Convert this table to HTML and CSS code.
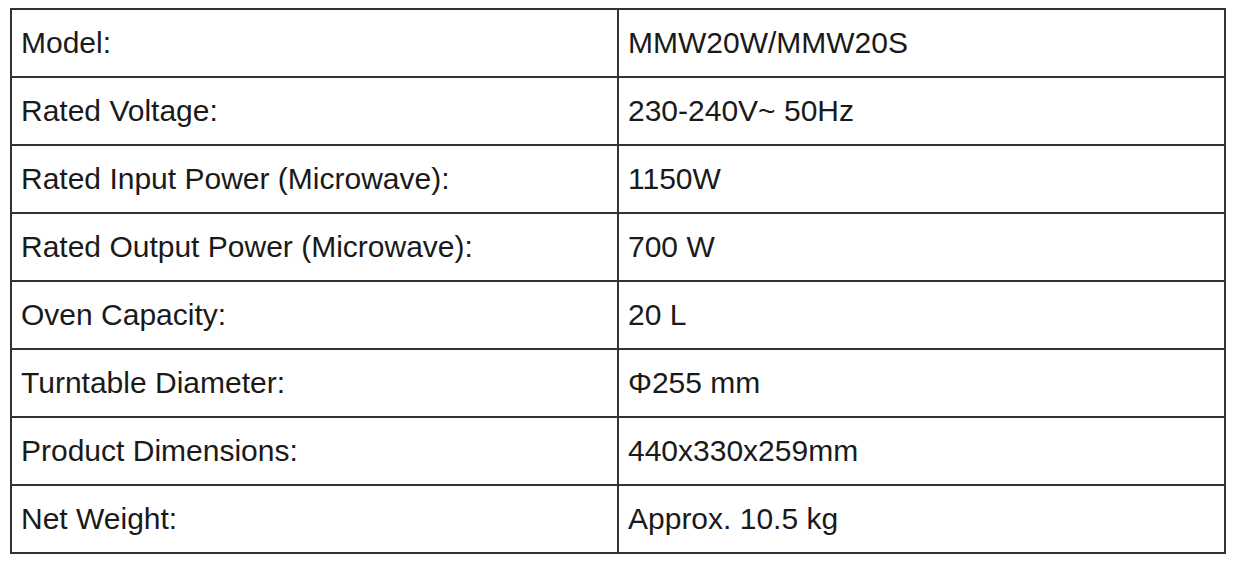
FILE: index.html
```html
<!DOCTYPE html>
<html>
<head>
<meta charset="utf-8">
<link rel="stylesheet" href="styles.css">
</head>
<body>
<table class="spec">
<tr><td class="label">Model:</td><td class="value">MMW20W/MMW20S</td></tr>
<tr><td class="label">Rated Voltage:</td><td class="value">230-240V~ 50Hz</td></tr>
<tr><td class="label">Rated Input Power (Microwave):</td><td class="value">1150W</td></tr>
<tr><td class="label">Rated Output Power (Microwave):</td><td class="value">700 W</td></tr>
<tr><td class="label">Oven Capacity:</td><td class="value">20 L</td></tr>
<tr><td class="label">Turntable Diameter:</td><td class="value">Φ255 mm</td></tr>
<tr><td class="label">Product Dimensions:</td><td class="value">440x330x259mm</td></tr>
<tr><td class="label">Net Weight:</td><td class="value">Approx. 10.5 kg</td></tr>
</table>
</body>
</html>
```
FILE: styles.css
```css
html, body {
  margin: 0;
  padding: 0;
  background: #ffffff;
}
body {
  padding: 8px 0 0 10px;
  font-family: "Liberation Sans", Arial, sans-serif;
  color: #1a1a1a;
}
.spec {
  border-collapse: collapse;
  width: 1216px;
  table-layout: fixed;
}
.spec td {
  border: 2px solid #333333;
  height: 68px;
  padding: 0 0 0 9px;
  font-size: 30px;
  vertical-align: middle;
  box-sizing: border-box;
}
.spec td.label {
  width: 607px;
}
```
